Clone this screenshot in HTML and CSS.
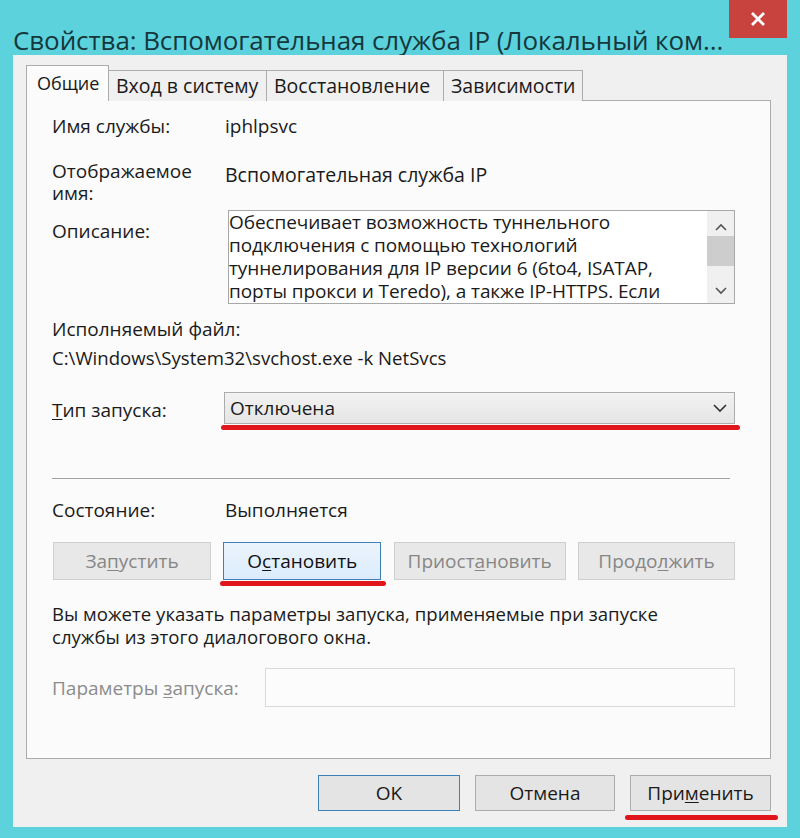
FILE: index.html
```html
<!DOCTYPE html>
<html lang="ru">
<head>
<meta charset="utf-8">
<title>Свойства</title>
<link rel="stylesheet" href="styles.css">
</head>
<body>
<div class="window">
  <div class="titlebar">
    <div class="title">Свойства: Вспомогательная служба IP (Локальный ком...</div>
    <div class="close">
      <svg width="16" height="16" viewBox="0 0 16 16"><path d="M3 3 L13 13 M13 3 L3 13" stroke="#fff" stroke-width="2.8" stroke-linecap="square"/></svg>
    </div>
  </div>
  <div class="client">
    <div class="tabs">
      <div class="tab active">Общие</div>
      <div class="tab">Вход в систему</div>
      <div class="tab">Восстановление</div>
      <div class="tab">Зависимости</div>
    </div>
    <div class="pane">
      <div class="row row-name">
        <div class="label">Имя службы:</div>
        <div class="value">iphlpsvc</div>
      </div>
      <div class="row row-display">
        <div class="label label-two">
          <div class="line22">Отображаемое</div>
          <div class="line22">имя:</div>
        </div>
        <div class="value value-display">Вспомогательная служба IP</div>
      </div>
      <div class="row row-desc">
        <div class="label label-desc">Описание:</div>
        <div class="textarea">
          <div class="textarea-text">
            <div class="line23">Обеспечивает возможность туннельного</div>
            <div class="line23">подключения с помощью технологий</div>
            <div class="line23">туннелирования для IP версии 6 (6to4, ISATAP,</div>
            <div class="line23">порты прокси и Teredo), а также IP-HTTPS. Если</div>
          </div>
          <div class="scrollbar">
            <svg class="arrow" width="12" height="8" viewBox="0 0 12 8"><path d="M1 7 L6 2 L11 7" fill="none" stroke="#555" stroke-width="1.6"/></svg>
            <div class="thumb"></div>
            <div class="track"></div>
            <svg class="arrow" width="12" height="8" viewBox="0 0 12 8"><path d="M1 1 L6 6 L11 1" fill="none" stroke="#555" stroke-width="1.6"/></svg>
          </div>
        </div>
      </div>
      <div class="exe-label">Исполняемый файл:</div>
      <div class="exe-path">C:\Windows\System32\svchost.exe -k NetSvcs</div>
      <div class="row row-startup">
        <div class="label label-startup"><u>Т</u>ип запуска:</div>
        <div class="select marked">
          <span>Отключена</span>
          <svg width="16" height="10" viewBox="0 0 16 10"><path d="M2 2 L8 8 L14 2" fill="none" stroke="#333" stroke-width="1.6"/></svg>
        </div>
      </div>
      <div class="separator"></div>
      <div class="row row-state">
        <div class="label">Состояние:</div>
        <div class="value">Выполняется</div>
      </div>
      <div class="buttons">
        <div class="btn disabled w158">За<u>п</u>устить</div>
        <div class="btn focused w158 marked">О<u>с</u>тановить</div>
        <div class="btn disabled w172">Приост<u>а</u>новить</div>
        <div class="btn disabled w157">Продо<u>л</u>жить</div>
      </div>
      <div class="note">
        <div class="line23">Вы можете указать параметры запуска, применяемые при запуске</div>
        <div class="line23">службы из этого диалогового окна.</div>
      </div>
      <div class="row row-params">
        <div class="label label-params">Параметры <u>з</u>апуска:</div>
        <div class="input"></div>
      </div>
    </div>
    <div class="footer">
      <div class="fbtn default">OK</div>
      <div class="fbtn">Отмена</div>
      <div class="fbtn marked wide-mark">При<u>м</u>енить</div>
    </div>
  </div>
</div>
</body>
</html>
```

FILE: styles.css
```css
* { box-sizing: border-box; }
html, body { margin: 0; padding: 0; }
body {
  background: #5cd3dc;
  font-family: "Open Sans", "Noto Sans", sans-serif;
  font-size: 19px;
  color: #1a1a1a;
}
u { text-decoration: underline; text-underline-offset: 2px; text-decoration-thickness: 1px; }
.window {
  width: 800px;
  height: 838px;
  display: flex;
  flex-direction: column;
}
.titlebar {
  height: 55px;
  display: flex;
  align-items: flex-start;
}
.title {
  padding: 23px 0 0 13px;
  font-size: 26px;
  line-height: 34px;
  color: #15383d;
  white-space: nowrap;
  letter-spacing: -0.1px;
}
.close {
  margin-left: auto;
  margin-right: 13px;
  width: 58px;
  height: 38px;
  background: #c8423e;
  display: flex;
  align-items: center;
  justify-content: center;
}
.client {
  flex: 1;
  margin: 0 13px 11px 13px;
  background: #f0f0f0;
  padding: 11px 16px 16px 13px;
  display: flex;
  flex-direction: column;
}
.tabs {
  display: flex;
  align-items: flex-end;
  height: 35px;
  position: relative;
  z-index: 2;
  margin-bottom: -1px;
}
.tab {
  height: 31px;
  padding: 0 7px;
  border: 1px solid #acacac;
  border-bottom: none;
  border-left: none;
  background: #f0f0f0;
  font-size: 19.5px;
  line-height: 29px;
  white-space: nowrap;
}
.tab.active {
  height: 36px;
  border-left: 1px solid #acacac;
  background: #fbfbfb;
  padding: 0 10px;
  font-size: 18px;
  line-height: 34px;
  width: 83px;
}
.tab:nth-child(2) { width: 158px; }
.tab:nth-child(3) { width: 177px; }
.tab:nth-child(4) { width: 139px; }
.pane {
  height: 659px;
  border: 1px solid #acacac;
  background: #fbfbfb;
  padding: 0 35px 0 25px;
}
.row { display: flex; }
.label { width: 173px; flex-shrink: 0; line-height: 23px; }
.value { line-height: 23px; }
.line22 { height: 22px; line-height: 22px; white-space: nowrap; }
.line23 { height: 23px; line-height: 23px; white-space: nowrap; }
.row-name { margin-top: 14px; }
.row-display { margin-top: 22px; }
.value-display { padding-top: 3px; font-size: 19.5px; }
.row-desc { margin-top: 6px; }
.label-desc { padding-top: 10px; }
.textarea {
  margin-left: 3px;
  width: 507px;
  height: 94px;
  border: 1px solid #a8a8a8;
  background: #fff;
  display: flex;
}
.textarea-text {
  flex: 1;
  font-size: 19px;
  letter-spacing: -0.1px;
}
.scrollbar {
  width: 27px;
  background: #f0f0f0;
  display: flex;
  flex-direction: column;
  align-items: center;
}
.arrow { margin: 12px 0 5px; flex-shrink: 0; }
.scrollbar .arrow:last-child { margin: 6px 0 8px; }
.thumb { width: 27px; height: 30px; background: #cdcdcd; }
.track { flex: 1; }
.exe-label { margin-top: 14px; line-height: 23px; }
.exe-path { margin-top: 5px; line-height: 23px; font-size: 18.6px; }
.row-startup { margin-top: 23px; align-items: center; }
.label-startup { width: 172px; padding-top: 4px; }
.select {
  width: 513px;
  height: 32px;
  border: 1px solid #acacac;
  background: linear-gradient(#f2f2f2, #e5e5e5);
  display: flex;
  align-items: center;
  justify-content: space-between;
  padding: 0 6px 0 5px;
  position: relative;
}
.marked::after {
  content: "";
  position: absolute;
  left: -4px;
  right: -6px;
  bottom: -7px;
  height: 5px;
  border-radius: 3px;
  background: #e0161c;
}
.separator {
  margin-top: 54px;
  height: 1px;
  background: #a0a0a0;
  margin-right: 5px;
}
.row-state { margin-top: 20px; }
.buttons {
  margin-top: 20px;
  display: flex;
  justify-content: space-between;
  margin-left: 1px;
}
.btn {
  height: 38px;
  border: 1px solid #cfcfcf;
  background: #e8e8e8;
  display: flex;
  align-items: center;
  justify-content: center;
  position: relative;
}
.btn.disabled { color: #868686; }
.btn.focused {
  border-color: #3c80b6;
  background: linear-gradient(#ebf4fc, #dcecfc);
  color: #111;
}
.w158 { width: 158px; }
.w172 { width: 172px; }
.w157 { width: 157px; }
.note { margin-top: 22px; font-size: 18.6px; }
.row-params { margin-top: 20px; align-items: center; }
.label-params { width: 213px; color: #8c8c8c; padding-top: 2px; }
.input {
  width: 472px;
  height: 39px;
  border: 1px solid #d9d9d9;
  background: #fcfcfc;
}
.footer {
  margin-top: 16px;
  display: flex;
  justify-content: flex-end;
  gap: 15px;
}
.fbtn {
  width: 141px;
  height: 36px;
  border: 1px solid #acacac;
  background: #e4e4e4;
  display: flex;
  align-items: center;
  justify-content: center;
  position: relative;
}
.fbtn.default { border-color: #3c80b6; width: 142px; }
.fbtn:nth-child(2) { width: 140px; }
.wide-mark::after { left: -6px; right: -8px; bottom: -10px; }
```
